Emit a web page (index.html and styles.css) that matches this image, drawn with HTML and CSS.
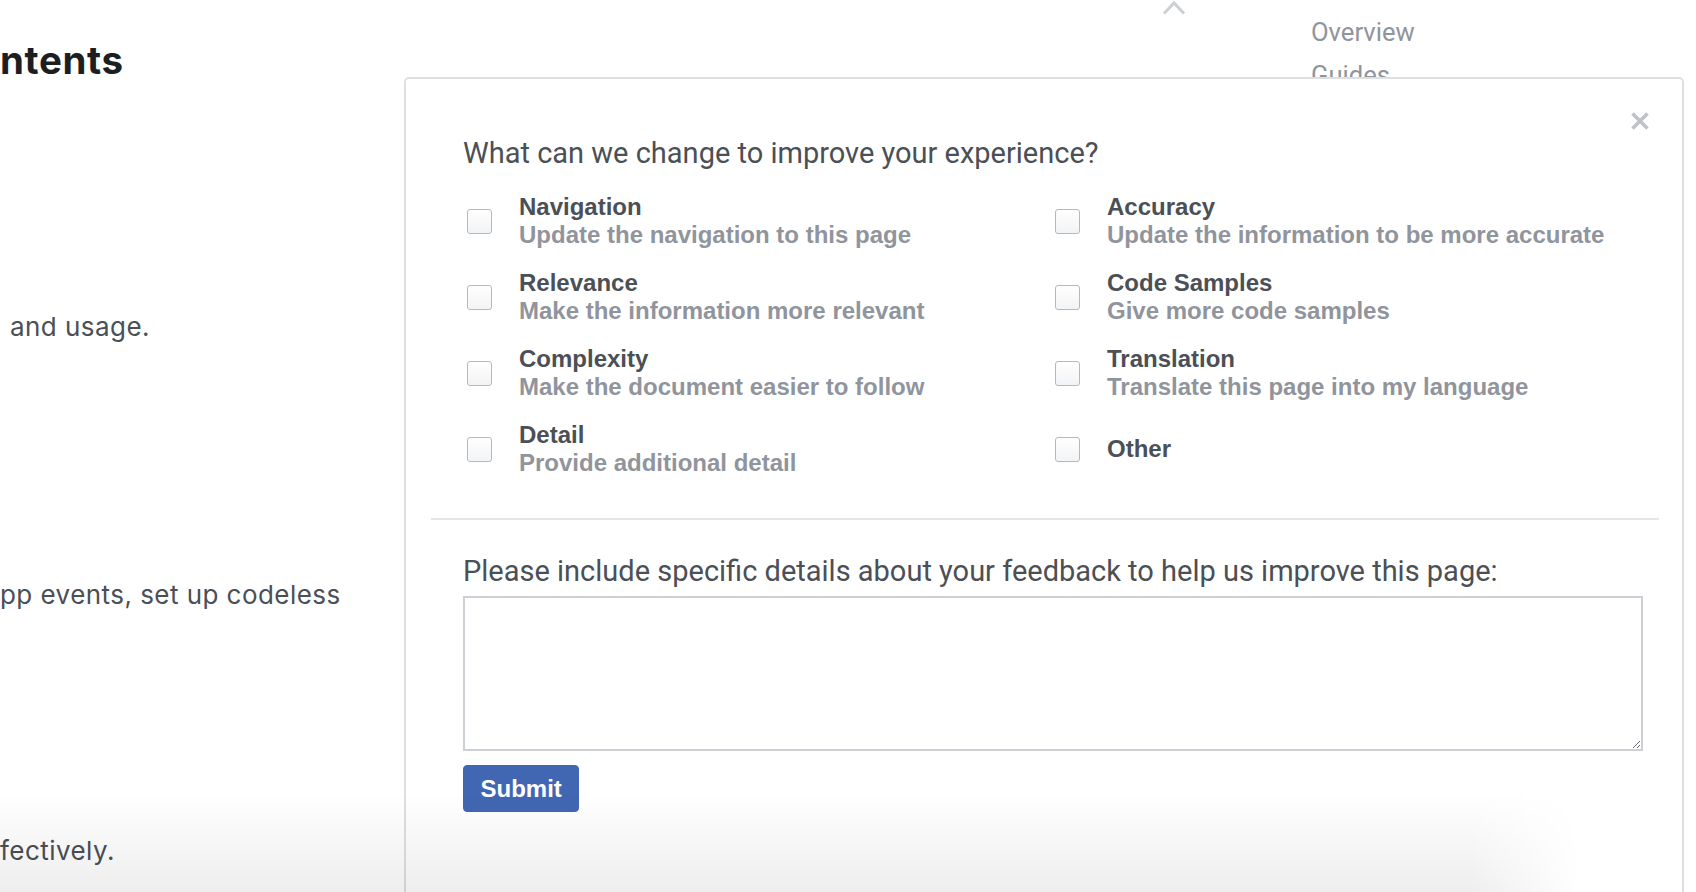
FILE: index.html
```html
<!DOCTYPE html>
<html lang="en">
<head>
<meta charset="utf-8">
<title>Feedback</title>
<link rel="stylesheet" href="styles.css">
</head>
<body>
<div class="page">
  <div class="article">
    <h1 class="heading">ntents</h1>
    <p class="line line-1">and usage.</p>
    <p class="line line-2">pp events, set up codeless</p>
    <p class="line line-3">fectively.</p>
  </div>
  <div class="blank"></div>
  <div class="chev-col">
    <svg class="chev" width="24" height="15" viewBox="0 0 24 15"><polyline points="2,13.5 12,3 22,13.5" fill="none" stroke="#ccd0d5" stroke-width="3"/></svg>
  </div>
  <nav class="sidebar">
    <a class="nav-item">Overview</a>
    <a class="nav-item">Guides</a>
  </nav>
</div>

<div class="modal">
  <button class="close" aria-label="Close">
    <svg width="20" height="20" viewBox="0 0 20 20"><path d="M2.5 2.5 L17.5 17.5 M17.5 2.5 L2.5 17.5" stroke="#bec3c9" stroke-width="3.6" fill="none"/></svg>
  </button>
  <div class="modal-body">
    <section class="section section-top">
      <p class="question">What can we change to improve your experience?</p>
      <div class="options">
        <label class="option"><span class="box"></span><span class="text"><span class="title">Navigation</span><span class="desc">Update the navigation to this page</span></span></label>
        <label class="option"><span class="box"></span><span class="text"><span class="title">Accuracy</span><span class="desc">Update the information to be more accurate</span></span></label>
        <label class="option"><span class="box"></span><span class="text"><span class="title">Relevance</span><span class="desc">Make the information more relevant</span></span></label>
        <label class="option"><span class="box"></span><span class="text"><span class="title">Code Samples</span><span class="desc">Give more code samples</span></span></label>
        <label class="option"><span class="box"></span><span class="text"><span class="title">Complexity</span><span class="desc">Make the document easier to follow</span></span></label>
        <label class="option"><span class="box"></span><span class="text"><span class="title">Translation</span><span class="desc">Translate this page into my language</span></span></label>
        <label class="option"><span class="box"></span><span class="text"><span class="title">Detail</span><span class="desc">Provide additional detail</span></span></label>
        <label class="option"><span class="box"></span><span class="text"><span class="title">Other</span></span></label>
      </div>
    </section>
    <div class="sep"></div>
    <section class="section section-bottom">
      <label class="prompt">Please include specific details about your feedback to help us improve this page:</label>
      <textarea class="details"></textarea>
      <button class="submit">Submit</button>
    </section>
  </div>
</div>
<div class="fade"></div>
</body>
</html>
```
FILE: styles.css
```css
html, body {
  margin: 0;
  padding: 0;
}
body {
  width: 1696px;
  height: 892px;
  overflow: hidden;
  position: relative;
  background: #fff;
  font-family: "Inter", "Liberation Sans", sans-serif;
}
.page {
  display: grid;
  grid-template-columns: 404px 758px 149px 1fr;
  height: 892px;
}
.article {
  overflow: hidden;
  white-space: nowrap;
  color: #4b4f56;
}
.heading {
  margin: 0;
  padding-top: 38px;
  font-family: "Inter", sans-serif;
  font-weight: 700;
  font-size: 38.5px;
  line-height: 44px;
  color: #1c1e21;
  letter-spacing: 0.6px;
}
.line {
  margin: 0;
  font-size: 26px;
  line-height: 36px;
  letter-spacing: 0.45px;
}
.line-1 { margin-top: 227px; padding-left: 10px; }
.line-2 { margin-top: 232px; }
.line-3 { margin-top: 220px; }
.chev {
  display: block;
}
.sidebar {
  display: flex;
  flex-direction: column;
  padding-top: 15px;
}
.nav-item {
  font-family: "Roboto", sans-serif;
  font-size: 25.6px;
  color: #90949c;
}
.nav-item:first-child { height: 34px; line-height: 34px; margin-bottom: 9px; }
.nav-item:last-child { height: 34px; line-height: 34px; }

.modal {
  position: absolute;
  left: 404px;
  top: 77px;
  width: 1280px;
  height: 860px;
  box-sizing: border-box;
  border: 2px solid #dddfe2;
  border-radius: 5px;
  background: #fff;
}
.close {
  position: absolute;
  top: 32px;
  right: 32px;
  width: 20px;
  height: 20px;
  padding: 0;
  border: 0;
  background: transparent;
}
.close svg { display: block; }
.modal-body {
  padding: 0 23px 0 25px;
}
.section {
  padding: 0 16px 0 32px;
}
.section-top {
  padding-top: 58px;
  padding-bottom: 41px;
}
.question {
  margin: 0 0 24px;
  font-family: "Roboto", sans-serif;
  font-size: 29px;
  line-height: 32px;
  color: #4b4f56;
}
.options {
  display: grid;
  grid-template-columns: 588px 1fr;
  row-gap: 20px;
}
.option {
  display: flex;
  align-items: center;
  gap: 27px;
  font-family: "Liberation Sans", Arial, sans-serif;
  font-weight: 700;
  font-size: 24px;
  line-height: 28px;
}
.box {
  flex: none;
  width: 25px;
  height: 25px;
  margin-left: 4px;
  box-sizing: border-box;
  border: 1px solid #b4b9bf;
  border-radius: 3px;
  background: linear-gradient(#fff, #f2f3f5);
}
.text {
  display: flex;
  flex-direction: column;
}
.title { color: #4b4f56; }
.desc { color: #90949c; }
.sep {
  height: 2px;
  background: #e5e6e9;
}
.section-bottom {
  padding-top: 35px;
}
.prompt {
  display: block;
  margin-bottom: 9px;
  font-family: "Roboto", sans-serif;
  font-size: 29px;
  line-height: 32px;
  color: #4b4f56;
}
.details {
  display: block;
  width: 100%;
  height: 155px;
  box-sizing: border-box;
  margin: 0 0 14px;
  border: 2px solid #ccd0d5;
  border-radius: 0;
  resize: vertical;
  background: #fff;
}
.submit {
  display: block;
  height: 47px;
  padding: 0 16.5px;
  border: 1px solid #4267b2;
  border-radius: 4px;
  background: #4267b2;
  color: #fff;
  font-family: "Liberation Sans", Arial, sans-serif;
  font-weight: 700;
  font-size: 24px;
}
.fade {
  position: fixed;
  left: 0;
  bottom: 0;
  width: 1580px;
  height: 100px;
  pointer-events: none;
  background: linear-gradient(to bottom, rgba(0,0,0,0) 0%, rgba(0,0,0,0.065) 100%);
  -webkit-mask-image: linear-gradient(to right, #000 0, #000 1470px, transparent 1580px);
  mask-image: linear-gradient(to right, #000 0, #000 1470px, transparent 1580px);
}
```
